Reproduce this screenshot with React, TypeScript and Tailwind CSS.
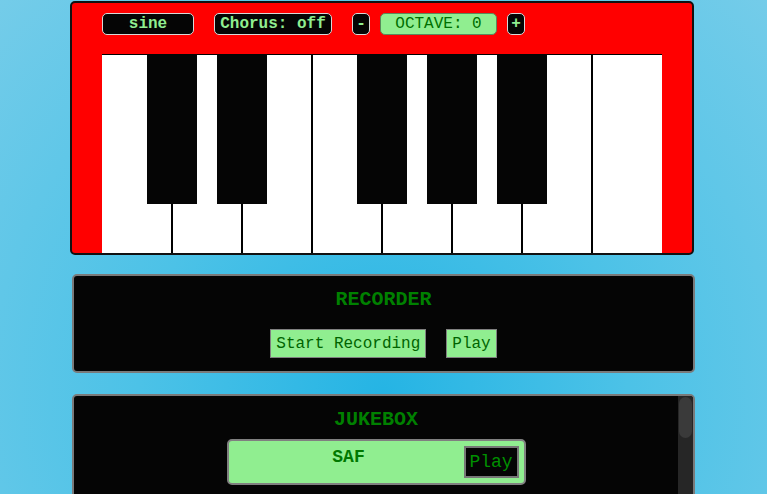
const WHITE_KEYS = ['C', 'D', 'E', 'F', 'G', 'A', 'B', 'C2'];
// black keys sit over the boundary after these white key indexes
const BLACK_AFTER = [0, 1, 3, 4, 5];

const mono = { fontFamily: '"Liberation Mono", "Courier New", monospace' };

const Controls = () => (
  <div className="flex items-center h-[22px]">
    <div className="w-[92px] h-[22px] flex items-center justify-center rounded-[5px] border border-[#d8d8d8] bg-[#050505] text-[#90ee90] text-[16px] font-bold leading-none">
      sine
    </div>
    <div className="ml-[20px] w-[118px] h-[22px] flex items-center justify-center rounded-[5px] border border-[#d8d8d8] bg-[#050505] text-[#90ee90] text-[16px] font-bold leading-none">
      Chorus: off
    </div>
    <button className="ml-[20px] w-[18px] h-[22px] flex items-center justify-center rounded-[5px] border border-[#d8d8d8] bg-[#050505] text-[#90ee90] text-[16px] font-bold leading-none">
      -
    </button>
    <div className="ml-[10px] w-[117px] h-[22px] flex items-center justify-center rounded-[5px] border border-[#5a8a5a] bg-[#90ee90] text-[#007000] text-[16px] leading-none">
      OCTAVE: 0
    </div>
    <button className="ml-[10px] w-[18px] h-[22px] flex items-center justify-center rounded-[5px] border border-[#d8d8d8] bg-[#050505] text-[#90ee90] text-[16px] font-bold leading-none">
      +
    </button>
  </div>
);

const Keyboard = () => (
  <div className="relative mt-[19px] flex w-[560px] h-[199px] border-t border-black">
    {WHITE_KEYS.map((k, i) => (
      <div
        key={k}
        className={`h-full bg-white ${
          i === 0 ? 'w-[69px]' : i === WHITE_KEYS.length - 1 ? 'w-[71px] border-l-2 border-black' : 'w-[70px] border-l-2 border-black'
        }`}
      />
    ))}
    {BLACK_AFTER.map((i) => (
      <div
        key={i}
        className="absolute top-[-1px] w-[50px] h-[150px] bg-[#050505]"
        style={{ left: (i + 1) * 70 - 25 }}
      />
    ))}
  </div>
);

export default function App() {
  return (
    <div
      className="w-[767px] h-[494px] overflow-hidden bg-[radial-gradient(ellipse_at_50%_80%,#25b4e4_0%,#4cc2e7_45%,#74cce9_100%)]"
      style={mono}
    >
      <div className="pt-[1px] w-[624px] ml-[70px]">
        {/* piano */}
        <div className="h-[254px] bg-[#ff0000] border-2 border-[#111] rounded-[5px] pt-[10px] px-[30px] overflow-hidden">
          <Controls />
          <Keyboard />
        </div>

        {/* recorder */}
        <div className="mt-[19px] ml-[2px] w-[623px] h-[99px] bg-[#050505] border-2 border-[#7a7a7a] rounded-[5px] flex flex-col items-center">
          <div className="mt-[12px] text-[20px] font-bold text-[#008000] leading-[24px]">RECORDER</div>
          <div className="mt-[17px] flex gap-[20px]">
            <button className="h-[29px] px-[5px] bg-[#90ee90] border border-[#808080] text-[#006400] text-[16px] leading-none">
              Start Recording
            </button>
            <button className="h-[29px] px-[5px] bg-[#90ee90] border border-[#808080] text-[#006400] text-[16px] leading-none">
              Play
            </button>
          </div>
        </div>

        {/* jukebox */}
        <div className="mt-[21px] ml-[2px] w-[623px] h-[110px] bg-[#050505] border-2 border-[#7a7a7a] rounded-[5px] flex overflow-hidden">
          <div className="flex-1 flex flex-col items-center">
            <div className="mt-[12px] text-[20px] font-bold text-[#008000] leading-[24px]">JUKEBOX</div>
            <div className="mt-[7px] w-[299px] h-[46px] bg-[#90ee90] border-2 border-[#808080] rounded-[5px] flex p-[5px]">
              <div className="flex-1 text-center text-[18px] font-bold text-[#007800] leading-[20px] pt-[1px]">SAF</div>
              <button className="w-[55px] h-[32px] bg-[#050505] border-2 border-[#777] text-[#009000] text-[18px] leading-none">
                Play
              </button>
            </div>
          </div>
          <div className="w-[15px] bg-[#262626] pt-[1px] px-[1px]">
            <div className="h-[41px] rounded-[7px] bg-[#3a3a3a]" />
          </div>
        </div>
      </div>
    </div>
  );
}
